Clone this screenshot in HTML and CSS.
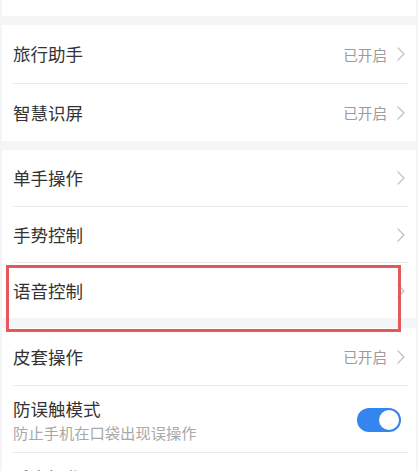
FILE: index.html
```html
<!DOCTYPE html>
<html lang="zh-CN">
<head>
<meta charset="utf-8">
<title>智能辅助</title>
<link rel="stylesheet" href="styles.css">
</head>
<body>
<div class="page">
  <section class="card">
    <div class="row row-tall row-top first">
      <div class="texts">
        <div class="title">悬浮导航</div>
        <div class="sub">通过悬浮按钮进行导航操作</div>
      </div>
      <svg class="chev" viewBox="0 0 8 14" width="8" height="14"><path d="M1 1 L7 7 L1 13" /></svg>
    </div>
  </section>

  <section class="card">
    <div class="row first">
      <div class="title">旅行助手</div>
      <span class="meta">已开启</span>
      <svg class="chev" viewBox="0 0 8 14" width="8" height="14"><path d="M1 1 L7 7 L1 13" /></svg>
    </div>
    <div class="row">
      <div class="title">智慧识屏</div>
      <span class="meta">已开启</span>
      <svg class="chev" viewBox="0 0 8 14" width="8" height="14"><path d="M1 1 L7 7 L1 13" /></svg>
    </div>
  </section>

  <section class="card">
    <div class="row row-compact first">
      <div class="title">单手操作</div>
      <svg class="chev" viewBox="0 0 8 14" width="8" height="14"><path d="M1 1 L7 7 L1 13" /></svg>
    </div>
    <div class="row row-compact">
      <div class="title">手势控制</div>
      <svg class="chev" viewBox="0 0 8 14" width="8" height="14"><path d="M1 1 L7 7 L1 13" /></svg>
    </div>
    <div class="row row-compact">
      <div class="title">语音控制</div>
      <svg class="chev" viewBox="0 0 8 14" width="8" height="14"><path d="M1 1 L7 7 L1 13" /></svg>
    </div>
  </section>

  <section class="card">
    <div class="row row-mid first">
      <div class="title">皮套操作</div>
      <span class="meta">已开启</span>
      <svg class="chev" viewBox="0 0 8 14" width="8" height="14"><path d="M1 1 L7 7 L1 13" /></svg>
    </div>
    <div class="row row-tall">
      <div class="texts">
        <div class="title">防误触模式</div>
        <div class="sub">防止手机在口袋出现误操作</div>
      </div>
      <div class="toggle on"><span class="knob"></span></div>
    </div>
    <div class="row row-tall row-last">
      <div class="texts">
        <div class="title">手套操作</div>
      </div>
      <span class="meta">已开启</span>
      <svg class="chev" viewBox="0 0 8 14" width="8" height="14"><path d="M1 1 L7 7 L1 13" /></svg>
    </div>
  </section>
</div>
<div class="highlight"></div>
</body>
</html>
```

FILE: styles.css
```css
html, body {
  margin: 0;
  padding: 0;
}
body {
  background: #f4f5f7;
  font-family: "Noto Sans CJK SC", "Noto Sans", sans-serif;
  width: 418px;
  height: 471px;
  overflow: hidden;
  position: relative;
}
.page {
  margin-top: -51px;
  display: flex;
  flex-direction: column;
  gap: 9px;
}
.card {
  background: #ffffff;
  margin: 0 2px;
  display: flex;
  flex-direction: column;
}
.card:nth-child(4) {
  margin-top: 1px;
}
.row {
  box-sizing: border-box;
  height: 58px;
  margin: 0 8px 0 11px;
  padding-right: 3px;
  border-top: 1px solid #ebebeb;
  display: flex;
  align-items: center;
}
.row.first {
  border-top: none;
}
.row-compact {
  height: 56px;
}
.row-mid {
  height: 57px;
}
.row-tall {
  height: 67px;
}
.row-top {
  padding-bottom: 10px;
}
.row-last {
  padding-top: 4px;
  align-items: flex-start;
}
.row-last .texts {
  padding-top: 10px;
}
.row-last .meta,
.row-last .chev {
  margin-top: 22px;
}
.texts {
  flex: 1;
  display: flex;
  flex-direction: column;
  gap: 3px;
  padding-top: 1px;
}
.title {
  flex: 1;
  font-size: 17.5px;
  line-height: 22px;
  color: #333333;
}
.sub {
  font-size: 15.3px;
  line-height: 18px;
  color: #a8a8a8;
}
.meta {
  font-size: 14.6px;
  color: #9c9c9c;
  margin-right: 10px;
}
.chev {
  flex: none;
}
.chev path {
  fill: none;
  stroke: #c2c2c2;
  stroke-width: 1.3;
  stroke-linecap: round;
  stroke-linejoin: round;
}
.toggle {
  flex: none;
  width: 44px;
  height: 24px;
  border-radius: 12px;
  background: #d8d8d8;
  margin-right: 4px;
  margin-top: 1px;
  box-sizing: border-box;
  padding: 2px;
  display: flex;
  justify-content: flex-start;
}
.toggle.on {
  background: #3585ee;
  justify-content: flex-end;
}
.knob {
  width: 20px;
  height: 20px;
  border-radius: 50%;
  background: #ffffff;
}
.highlight {
  position: absolute;
  left: 6px;
  top: 265px;
  width: 395px;
  height: 67px;
  box-sizing: border-box;
  border: 3px solid #e4585c;
}
```
